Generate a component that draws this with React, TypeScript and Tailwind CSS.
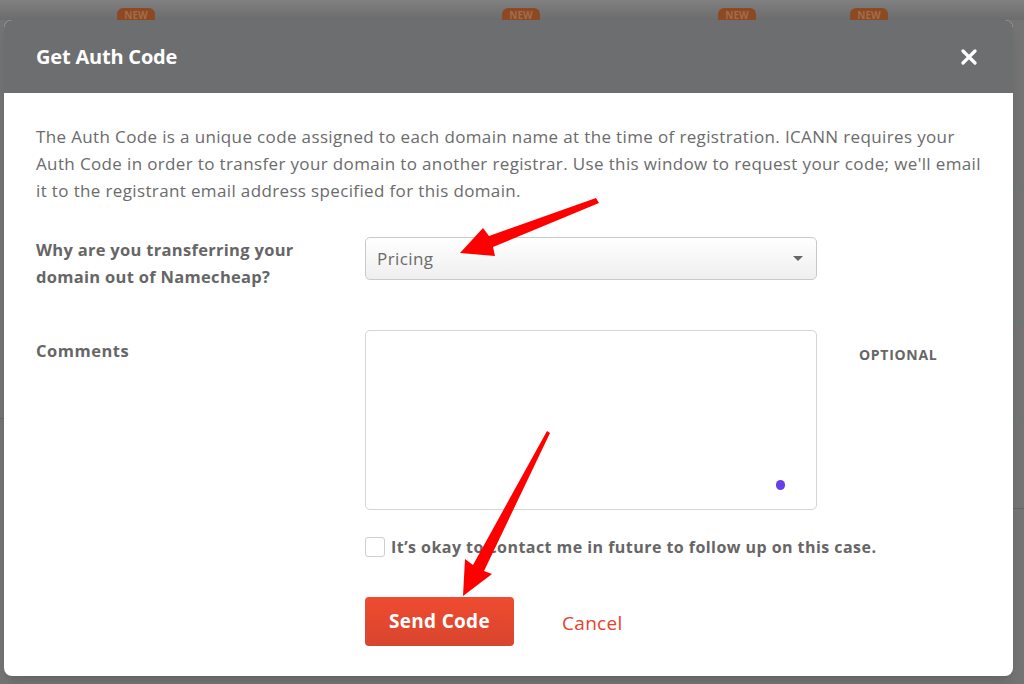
import React from "react";

const font = { fontFamily: '"Open Sans", "Liberation Sans", sans-serif' };

const Arrows = () => (
  <svg className="absolute inset-0 pointer-events-none" width="1024" height="684" viewBox="0 0 1024 684">
    {/* arrow to select */}
    <polygon points="596,198 599,203 493,247 495,256 460,253 483,228 489,236" fill="#ff0000" />
    {/* arrow to button */}
    <polygon points="547,431 550,433 484,571 492,574 463,596 465,559 473,565" fill="#ff0000" />
  </svg>
);

const App = () => {
  return (
    <div className="relative w-[1024px] h-[684px] overflow-hidden bg-[#747474]" style={font}>
      {/* BACKDROP PAGE */}
      <div className="absolute inset-x-0 top-0 h-[20px] bg-gradient-to-b from-[#808080] to-[#6c6c6c]" />
      <div className="absolute top-[8px] left-[117px] w-[38px] h-[14px] rounded-t-md bg-[#8b4a24] text-[10px] font-bold text-[#a56b4a] text-center leading-[14px]">NEW</div>
      <div className="absolute top-[8px] left-[502px] w-[38px] h-[14px] rounded-t-md bg-[#8b4a24] text-[10px] font-bold text-[#a56b4a] text-center leading-[14px]">NEW</div>
      <div className="absolute top-[8px] left-[718px] w-[38px] h-[14px] rounded-t-md bg-[#8b4a24] text-[10px] font-bold text-[#a56b4a] text-center leading-[14px]">NEW</div>
      <div className="absolute top-[8px] left-[850px] w-[38px] h-[14px] rounded-t-md bg-[#8b4a24] text-[10px] font-bold text-[#a56b4a] text-center leading-[14px]">NEW</div>
      <div className="absolute left-0 top-[186px] w-[4px] h-px bg-[#5f7c7c]" />
      <div className="absolute left-0 top-[320px] w-[4px] h-px bg-[#5f7c7c]" />
      <div className="absolute left-0 top-[418px] w-[4px] h-px bg-[#666]" />
      <div className="absolute right-0 top-[186px] w-[11px] h-px bg-[#5f7c7c]" />
      <div className="absolute right-0 top-[320px] w-[11px] h-px bg-[#5f7c7c]" />
      <div className="absolute right-0 top-[418px] w-[11px] h-px bg-[#5f7c7c]" />
      <div className="absolute right-0 top-[508px] w-[11px] h-px bg-[#666]" />

      {/* MODAL */}
      <div className="relative ml-[4px] mt-[20px] w-[1009px] h-[656px] rounded-lg overflow-hidden bg-white shadow-lg">
        <div className="h-[73px] bg-[#6d6e70] flex items-center justify-between pl-[32px] pr-[36px]">
          <h2 className="text-[20px] font-bold text-white tracking-[-0.2px]">Get Auth Code</h2>
          <svg width="16" height="16" viewBox="0 0 16 16">
            <path d="M2 2 L14 14 M14 2 L2 14" stroke="#fff" strokeWidth="3.2" strokeLinecap="round" />
          </svg>
        </div>

        <div className="pl-[32px] pr-[20px] pt-[30px]">
          <p className="text-[17px] leading-[27px] text-[#6b6b6b] tracking-[0.36px] whitespace-nowrap">
            The Auth Code is a unique code assigned to each domain name at the time of registration. ICANN requires your
            <br />
            Auth Code in order to transfer your domain to another registrar. Use this window to request your code; we'll email
            <br />
            it to the registrant email address specified for this domain.
          </p>

          <div className="grid grid-cols-[329px_452px_1fr] mt-[32px]">
            <label className="text-[16.5px] leading-[27px] font-bold text-[#666] tracking-[0.3px]">
              Why are you transferring your
              <br />
              domain out of Namecheap?
            </label>
            <div className="mt-px h-[43px] rounded-[5px] border border-[#c9c9c9] bg-gradient-to-b from-white to-[#efefef] flex items-center justify-between pl-[11px] pr-[13px]">
              <span className="text-[17px] text-[#6b6b6b] tracking-[0.4px]">Pricing</span>
              <span className="w-0 h-0 border-l-[5px] border-r-[5px] border-t-[5px] border-l-transparent border-r-transparent border-t-[#666]" />
            </div>
            <div />

            <label className="text-[16.5px] font-bold text-[#666] mt-[47px] leading-[27px] tracking-[0.5px]">Comments</label>
            <div className="relative mt-[40px] h-[180px] rounded-[5px] border border-[#d4d4d4] bg-white">
              <span className="absolute right-[31px] bottom-[19px] w-[9px] h-[10px] rounded-full bg-[#6540e8]" />
            </div>
            <div className="mt-[54px] pl-[42px] text-[14px] font-bold text-[#666] tracking-[0.7px]">OPTIONAL</div>

            <div />
            <div className="col-span-2 mt-[25px] flex items-center gap-[6px]">
              <span className="w-[20px] h-[20px] rounded-[3px] border border-[#cfcfcf] bg-white" />
              <span className="text-[16px] font-bold text-[#666] tracking-[0.45px]">It’s okay to contact me in future to follow up on this case.</span>
            </div>

            <div />
            <div className="col-span-2 mt-[38px] flex items-center gap-[48px]">
              <button className="w-[149px] h-[49px] rounded-[4px] bg-gradient-to-b from-[#ef4b30] to-[#d8452e] text-white text-[19px] font-bold tracking-[0.3px]">
                Send Code
              </button>
              <span className="text-[19px] text-[#e8412c] tracking-[0.3px] pt-[3px]">Cancel</span>
            </div>
          </div>
        </div>
      </div>

      <Arrows />
    </div>
  );
};

export default App;
